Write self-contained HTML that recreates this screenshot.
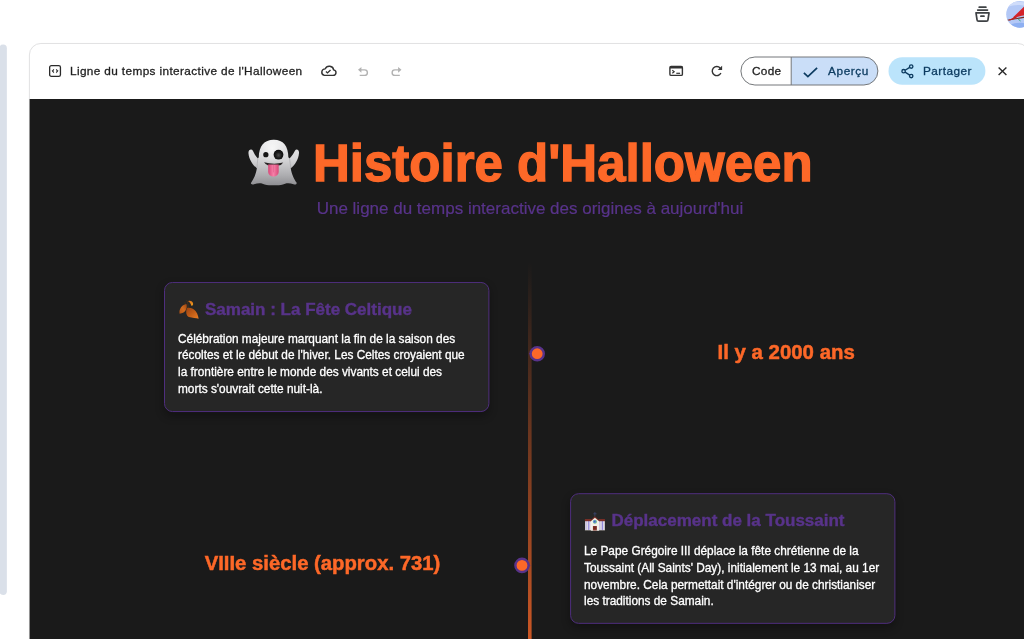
<!DOCTYPE html>
<html lang="fr">
<head>
<meta charset="utf-8">
<title>Ligne du temps interactive de l'Halloween</title>
<style>
*{box-sizing:border-box;margin:0;padding:0}
html,body{width:1024px;height:639px;overflow:hidden;background:#fff;font-family:"Liberation Sans",sans-serif;}
body{position:relative;will-change:transform}
.abs{position:absolute}
svg{position:absolute;overflow:visible}
.tb{color:#1f1f1f;font-size:11.8px;letter-spacing:.37px;-webkit-text-stroke:.3px;white-space:nowrap;line-height:1}
#h1{left:313px;top:138.300px;-webkit-text-stroke:1.3px #fd6828;font-size:51px;font-weight:bold;color:#fd6828;line-height:1;white-space:nowrap}
#sub{-webkit-text-stroke:.2px #58338a;left:316.7px;top:199.6px;font-size:17px;color:#58338a;line-height:1;white-space:nowrap}
.h3{-webkit-text-stroke:.4px #58338a;font-size:17px;font-weight:bold;color:#58338a;white-space:nowrap;line-height:1}
.p{-webkit-text-stroke:.3px #fff;font-size:11.85px;color:#fff;line-height:16.83px;white-space:nowrap}
.date{-webkit-text-stroke:.5px #fd6828;font-size:20.4px;font-weight:bold;color:#fd6828;white-space:nowrap;line-height:1}
</style>
</head>
<body>
<svg style="left:0;top:0" width="1024" height="639" viewBox="0 0 1024 639"><rect x="-.5" y="44.500" width="7.350" height="550.500" rx="3.670" fill="#dae0e9"/><rect x="29.400" y="43.450" width="999.800" height="700" rx="11.500" fill="#fff" stroke="#e1e1e2" stroke-width="1"/><rect x="29.600" y="99" width="999.400" height="545" fill="#1a1a1a"/></svg>

<!-- top right -->
<svg style="left:0;top:0" width="1024" height="34" viewBox="0 0 1024 34"><defs><clipPath id="av"><circle cx="1019.650" cy="14.350" r="13.450"/></clipPath><filter id="avb" x="-10%" y="-10%" width="120%" height="120%"><feGaussianBlur stdDeviation="6"/></filter></defs><g fill="none" stroke="#3e4144" stroke-width="1.700" stroke-linecap="round" stroke-linejoin="round"><path d="M979.200 7.200H985.900M977.700 10.100H987.500M980.900 16.200H984"/><path d="M976 12.900H989L988 19.700a1.600 1.600 0 0 1-1.600 1.500H978.600a1.600 1.600 0 0 1-1.600-1.500Z"/></g><g clip-path="url(#av)"><rect x="1004" y="0" width="24" height="30" fill="#b3c8f6"/><g transform="translate(964,0) scale(.05859)" filter="url(#avb)"><path d="M700 60C800 10 950 20 1060 50V110C950 70 820 80 720 130Z" fill="#cfdcfa"/><path d="M780 430C860 390 960 380 1060 400V500H780Z" fill="#8eb0f2"/><path d="M738 345C800 340 900 315 1040 292" stroke="#7a2a20" stroke-width="18" fill="none"/><path d="M842 292L1040 100V262C960 272 900 292 850 312Z" fill="#d42329"/><path d="M770 350C820 345 870 320 905 300L860 285C830 310 800 325 768 335Z" fill="#c0201f"/><path d="M925 325L965 358" stroke="#22a86a" stroke-width="16"/></g></g></svg>

<!-- toolbar left -->
<svg style="left:48.800px;top:65px" width="12.100" height="12" viewBox="0 0 12.100 12"><rect x=".65" y=".65" width="10.800" height="10.700" rx="1.700" fill="none" stroke="#2a2a2a" stroke-width="1.300"/><path d="M4.800 4.100 2.900 6 4.800 7.900C4.200 6.700 4.200 5.300 4.800 4.100ZM7.300 4.100 9.200 6 7.300 7.900C7.900 6.700 7.900 5.300 7.300 4.100Z" fill="#2a2a2a" stroke="#2a2a2a" stroke-width=".5" stroke-linejoin="round"/></svg>
<div class="abs tb" style="left:70px;top:66.200px">Ligne du temps interactive de l'Halloween</div>
<svg style="left:320.150px;top:64.800px" width="16.870" height="11.400" viewBox="0 0 16 11.500" preserveAspectRatio="none"><path d="M4.100 10.500h8.300a2.800 2.800 0 0 0 .5-5.550 4.100 4.100 0 0 0-7.900-1.100A3.400 3.400 0 0 0 4.100 10.500z" fill="none" stroke="#333" stroke-width="1.350" stroke-linejoin="round"/><path d="M5.600 6.600 7.100 8 10 5" fill="none" stroke="#333" stroke-width="1.250"/></svg>


<!-- toolbar right -->


<svg style="left:0;top:0" width="1024" height="100" viewBox="0 0 1024 100"><defs><clipPath id="pc"><rect x="740.900" y="57" width="137" height="28" rx="14"/></clipPath></defs><rect x="740.900" y="57" width="137" height="28" rx="14" fill="#fff"/><rect x="791.200" y="57" width="90" height="28" fill="#cadef8" clip-path="url(#pc)"/><path d="M791.200 57v28" stroke="#74777a" stroke-width="1"/><rect x="740.900" y="57" width="137" height="28" rx="14" fill="none" stroke="#74777a" stroke-width="1"/><rect x="888.500" y="57.200" width="96.900" height="27.500" rx="13.750" fill="#bbe4fb"/><g fill="none" stroke="#b2b2b2" stroke-width="1.400"><path d="M361 69.850H364.600a2.780 2.780 0 0 1 0 5.560H359.700"/><path d="M398.500 69.850H394.900a2.780 2.780 0 0 0 0 5.560H399.800"/></g><path d="M358 69.850 361.400 67V72.700ZM401.500 69.850 398.100 67V72.700Z" fill="#b2b2b2"/><rect x="669.900" y="66.500" width="12.500" height="8.900" rx="1.200" fill="none" stroke="#333" stroke-width="1.400"/><rect x="669.900" y="66.200" width="12.500" height="2.300" fill="#333"/><path d="M672.300 70.300 674.200 71.800 672.300 73.300" fill="none" stroke="#333" stroke-width="1.100"/><path d="M676.300 73.300H680.100" stroke="#333" stroke-width="1.200"/><path d="M720.290 68.180A4.550 4.550 0 1 0 720.920 73.020" fill="none" stroke="#333" stroke-width="1.400"/><path d="M722.100 65.800V70.100H717.700Z" fill="#333"/></svg>
<div class="abs tb" style="left:752px;top:66.200px;letter-spacing:.3px">Code</div>
<svg style="left:802.500px;top:66.500px" width="15" height="11" viewBox="0 0 15 11"><path d="M.9 5.900 4.900 9.700 14.100 .9" fill="none" stroke="#0d3c61" stroke-width="1.700"/></svg>
<div class="abs tb" style="left:828px;top:66.200px;color:#0d3c61;letter-spacing:.6px">Aperçu</div>

<svg style="left:900.500px;top:63.800px" width="13" height="14.500" viewBox="0 0 13 14.500"><g fill="none" stroke="#0d3c61" stroke-width="1.350"><circle cx="10.200" cy="2.500" r="1.700"/><circle cx="2.600" cy="7.200" r="1.700"/><circle cx="10.200" cy="12" r="1.700"/><path d="M4.100 6.300 8.700 3.400M4.100 8.100l4.600 3"/></g></svg>
<div class="abs tb" style="left:923px;top:66.200px;color:#0d3c61;letter-spacing:.45px">Partager</div>
<svg style="left:997.500px;top:67px" width="9" height="8.500" viewBox="0 0 9 8.500"><path d="M.6 .5 8.400 8M8.400 .5.600 8" stroke="#2b2b2b" stroke-width="1.400" fill="none"/></svg>

<!-- content -->
<svg style="left:240px;top:132px" width="68" height="60" viewBox="0 0 724 639"><defs><linearGradient id="gb" x1="0" y1="0" x2="0" y2="1"><stop offset="0" stop-color="#ececed"/><stop offset=".42" stop-color="#d6d6d8"/><stop offset=".78" stop-color="#adadb0"/><stop offset="1" stop-color="#8e8e92"/></linearGradient><radialGradient id="gh" cx=".45" cy=".28" r=".45"><stop offset="0" stop-color="#ffffff" stop-opacity=".7"/><stop offset="1" stop-color="#ffffff" stop-opacity="0"/></radialGradient><radialGradient id="ge" cx=".5" cy=".55" r=".5"><stop offset="0" stop-color="#4a4a4a"/><stop offset=".6" stop-color="#1c1c1c"/><stop offset="1" stop-color="#0c0c0c"/></radialGradient><linearGradient id="gt" x1="0" y1="0" x2="1" y2="0"><stop offset="0" stop-color="#d84878"/><stop offset=".5" stop-color="#f580a8"/><stop offset="1" stop-color="#d84878"/></linearGradient><filter id="gbl" x="-5%" y="-5%" width="110%" height="110%"><feGaussianBlur stdDeviation="4"/></filter></defs><g filter="url(#gbl)"><path d="M200 270C200 150 260 82 360 82C460 82 515 150 515 270L528 282C558 252 575 218 585 200C597 178 632 185 628 225C624 290 585 350 540 385C550 450 580 510 602 538C608 556 590 562 570 556C540 548 510 540 480 551C440 566 400 572 360 566C320 572 280 566 240 551C210 540 180 548 150 556C128 562 110 556 118 540C145 500 170 450 180 385C135 350 95 290 90 225C88 185 125 178 137 200C147 218 160 252 190 282Z" fill="url(#gb)"/><path d="M200 270C200 150 260 82 360 82C460 82 515 150 515 270L515 420L200 420Z" fill="url(#gh)"/><path d="M190 282C185 320 183 350 180 385" stroke="#a8a8ab" stroke-width="10" fill="none" opacity=".7"/><path d="M528 282C533 320 537 350 540 385" stroke="#a8a8ab" stroke-width="10" fill="none" opacity=".7"/><circle cx="275" cy="242" r="28" fill="#161616"/><circle cx="410" cy="242" r="52" fill="url(#ge)"/><path d="M256 322Q356 350 460 326Q446 354 410 356L300 356Q272 348 256 322Z" fill="#262222"/><path d="M300 346L412 346L412 420C412 455 386 473 356 473C326 473 300 455 300 420Z" fill="url(#gt)"/><path d="M356 350V430" stroke="#c8406e" stroke-width="6" opacity=".6"/></g></svg>
<div id="h1" class="abs">Histoire d'Halloween</div>
<div id="sub" class="abs">Une ligne du temps interactive des origines à aujourd'hui</div>

<svg style="left:0;top:0" width="1024" height="639" viewBox="0 0 1024 639"><defs><linearGradient id="lg" gradientUnits="userSpaceOnUse" x1="0" y1="262" x2="0" y2="745"><stop offset="0" stop-color="#fd6828" stop-opacity="0"/><stop offset="1" stop-color="#fd6828" stop-opacity="1"/></linearGradient></defs><rect x="528" y="262" width="3.600" height="377" fill="url(#lg)"/><path d="M528.700 353.700 531 352.300V355.100Z" fill="#58338a"/><circle cx="537.200" cy="353.700" r="6.600" fill="#fd6828" stroke="#58338a" stroke-width="2.400"/><path d="M530.700 565.400 528.400 564V566.800Z" fill="#58338a"/><circle cx="522" cy="565.400" r="6.600" fill="#fd6828" stroke="#58338a" stroke-width="2.400"/></svg>

<svg style="left:0;top:0" width="1024" height="639" viewBox="0 0 1024 639"><defs><filter id="sh" x="-10%" y="-10%" width="120%" height="130%"><feGaussianBlur stdDeviation="5"/></filter></defs><g fill="#000" opacity=".32" filter="url(#sh)"><rect x="164" y="286" width="325" height="130" rx="8"/><rect x="570" y="497.500" width="325" height="130" rx="8"/></g><g fill="#262626" stroke="#4f2e7e" stroke-width="1"><rect x="164.500" y="282.460" width="324.400" height="129.100" rx="8"/><rect x="570.600" y="493.700" width="324.300" height="129.650" rx="8"/></g></svg>
<svg style="left:174px;top:296px" width="30" height="28" viewBox="0 0 685 639"><defs><linearGradient id="l1" x1="1" y1="0" x2="0" y2="1"><stop offset="0" stop-color="#9c4410"/><stop offset=".5" stop-color="#cf6a1e"/><stop offset="1" stop-color="#b45416"/></linearGradient><linearGradient id="l2" x1="0" y1="0" x2="1" y2="1"><stop offset="0" stop-color="#9a420e"/><stop offset=".5" stop-color="#c05c18"/><stop offset="1" stop-color="#ea7e24"/></linearGradient><linearGradient id="l3" x1="0" y1="0" x2="1" y2="1"><stop offset="0" stop-color="#d86818"/><stop offset="1" stop-color="#f0a020"/></linearGradient><filter id="lbl" x="-10%" y="-10%" width="120%" height="120%"><feGaussianBlur stdDeviation="9"/></filter></defs><g filter="url(#lbl)"><path d="M290 95C310 130 325 200 322 275" stroke="#4a3218" stroke-width="20" fill="none"/><path d="M250 140L262 200" stroke="#4a3218" stroke-width="16" fill="none"/><path d="M284 183C190 195 105 300 128 404C250 395 315 290 284 183Z" fill="url(#l1)"/><path d="M300 272C258 350 280 452 340 482C420 504 500 512 562 518C552 440 522 350 440 295C390 268 340 262 300 272Z" fill="url(#l2)"/><path d="M322 118C370 98 432 120 437 180C432 217 410 228 394 217C384 170 360 140 322 118Z" fill="url(#l3)"/></g></svg>
<div class="abs h3" style="left:205px;top:300.500px">Samain : La Fête Celtique</div>
<div class="abs p" style="left:178px;top:330.500px">Célébration majeure marquant la fin de la saison des<br>récoltes et le début de l'hiver. Les Celtes croyaient que<br>la frontière entre le monde des vivants et celui des<br>morts s'ouvrait cette nuit-là.</div>
<div class="abs date" style="left:717.600px;top:342.100px">Il y a 2000 ans</div>

<svg style="left:580px;top:508px" width="30" height="28" viewBox="0 0 685 639"><defs><linearGradient id="cw" x1="0" y1="0" x2="1" y2="0"><stop offset="0" stop-color="#e8e2da"/><stop offset=".18" stop-color="#b9b2e6"/><stop offset=".36" stop-color="#efeae4"/><stop offset=".6" stop-color="#8f86d8"/><stop offset=".78" stop-color="#d8d4ee"/><stop offset="1" stop-color="#ece6de"/></linearGradient><radialGradient id="cr" cx=".45" cy=".45" r=".55"><stop offset="0" stop-color="#5a4ab0"/><stop offset=".55" stop-color="#5aa0c8"/><stop offset="1" stop-color="#78c070"/></radialGradient><filter id="cbl" x="-10%" y="-10%" width="120%" height="120%"><feGaussianBlur stdDeviation="7"/></filter></defs><g filter="url(#cbl)"><path d="M340 92V190M305 132H378" stroke="#3f4c7c" stroke-width="15" fill="none"/><rect x="115" y="298" width="140" height="205" fill="url(#cw)"/><rect x="430" y="298" width="137" height="205" fill="url(#cw)"/><rect x="112" y="252" width="145" height="48" fill="#7c2e26"/><rect x="428" y="252" width="142" height="48" fill="#7c2e26"/><path d="M340 190L448 292V305H232V292Z" fill="#7c2e26"/><path d="M340 222L436 300V518H248V300Z" fill="#f3efe9"/><circle cx="340" cy="315" r="47" fill="url(#cr)"/><rect x="295" y="412" width="90" height="106" fill="#7a2a22"/><path d="M340 412V518" stroke="#5a1c16" stroke-width="6"/><rect x="112" y="498" width="458" height="18" fill="#d8d2ca" opacity=".55"/></g></svg>
<div class="abs h3" style="left:611.500px;top:512.200px">Déplacement de la Toussaint</div>
<div class="abs p" style="left:584px;top:542.900px">Le Pape Grégoire III déplace la fête chrétienne de la<br>Toussaint (All Saints' Day), initialement le 13 mai, au 1er<br>novembre. Cela permettait d'intégrer ou de christianiser<br>les traditions de Samain.</div>
<div class="abs date" style="left:204.700px;top:552.700px;font-size:20.300px">VIIIe siècle (approx. 731)</div>
</body>
</html>
